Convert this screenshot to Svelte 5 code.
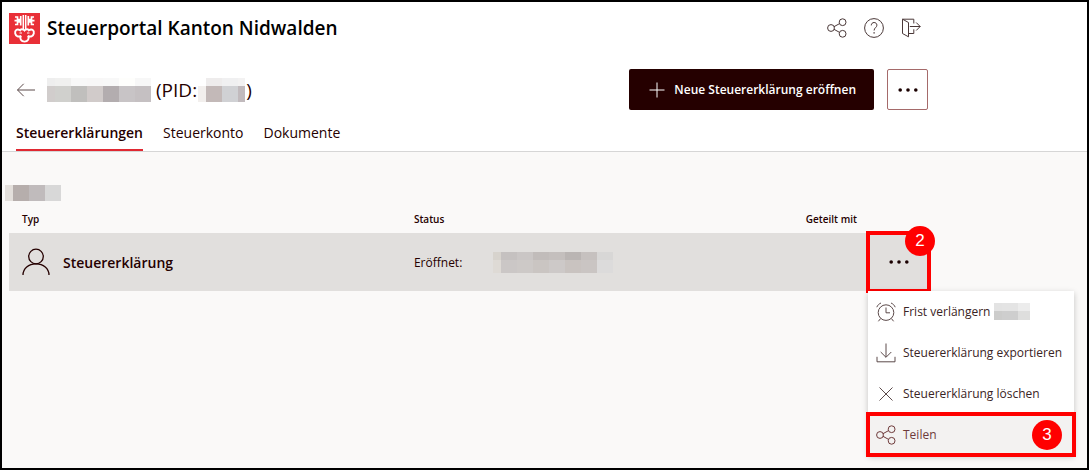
<script lang="ts">
  type Mosaic = { widths: number[]; rows: { height: number; colors: string[] }[] };

  const tabs = ['Steuererklärungen', 'Steuerkonto', 'Dokumente'];
  let activeTab = $state('Steuererklärungen');
  let menuOpen = $state(true);

  const menuItems = [
    { icon: 'clock', label: 'Frist verlängern' },
    { icon: 'download', label: 'Steuererklärung exportieren' },
    { icon: 'cross', label: 'Steuererklärung löschen' },
    { icon: 'share', label: 'Teilen' }
  ];

  const nameMosaic: Mosaic = {
    widths: [8, 16, 16, 16, 16, 16, 16],
    rows: [
      { height: 8, colors: ['#eeeeee', '#f0f0ef', '#f8f8f8', '#f8f7f7', '#f8f8f8', '#fefefc', '#f7f7f7'] },
      { height: 16, colors: ['#d1cdcc', '#d0d0cd', '#c0bfbd', '#d1cbca', '#b3adaf', '#c8c4c6', '#c5c0c2'] }
    ]
  };

  const pidMosaic: Mosaic = {
    widths: [8, 16, 16, 7],
    rows: [
      { height: 8, colors: ['#ffffff', '#eeecec', '#f0f0f1', '#f3f2f2'] },
      { height: 16, colors: ['#f2efed', '#c3b9b8', '#d0d1d4', '#c1babd'] }
    ]
  };

  const yearMosaic: Mosaic = {
    widths: [8, 16, 16, 16],
    rows: [{ height: 16, colors: ['#e3dfdb', '#b6aeac', '#c0bbbc', '#d8d8d8'] }]
  };

  const dateMosaic: Mosaic = {
    widths: [8, 16, 16, 16, 16, 16, 16, 16],
    rows: [
      { height: 8, colors: ['#d7d3cd', '#c5c1c0', '#cac6c5', '#c1bcba', '#c4bfbd', '#bab5b3', '#c6c1bf', '#d8d7d6'] },
      { height: 13, colors: ['#dedad5', '#cbc7c6', '#cdc9c7', '#cac5c2', '#cdc9c8', '#c9c3c0', '#cac5c3', '#dcdbdb'] }
    ]
  };

  const deadlineMosaic: Mosaic = {
    widths: [8, 16, 12],
    rows: [
      { height: 8, colors: ['#e3e3e3', '#e4e4e4', '#ececec'] },
      { height: 9, colors: ['#cccccb', '#cecece', '#dededd'] }
    ]
  };
</script>

{#snippet mosaic(m: Mosaic)}
  <span class="mosaic" aria-hidden="true">
    {#each m.rows as row}
      <span class="mosaic-row" style="height: {row.height}px">
        {#each row.colors as color, i}
          <span style="width: {m.widths[i]}px; background: {color}"></span>
        {/each}
      </span>
    {/each}
  </span>
{/snippet}

{#snippet icon(name: string)}
  <svg class="icon" viewBox="0 0 20 20" aria-hidden="true">
    {#if name === 'share'}
      <circle cx="4" cy="10" r="3.4" />
      <circle cx="15.6" cy="4.2" r="3.4" />
      <circle cx="15.6" cy="15.8" r="3.4" />
      <path d="M7 8.7 12.4 5.7M7 11.3l5.4 3" />
    {:else if name === 'help'}
      <circle cx="10" cy="10" r="9.4" />
      <path d="M7.3 7.4c0-1.8 1.2-2.9 2.8-2.9s2.8 1.1 2.8 2.7c0 2.4-2.8 2.5-2.8 5.3" />
      <path d="M10.1 14.2v1.4" stroke-width="1.4" />
    {:else if name === 'logout'}
      <path d="M1.5 1.2v14.3l6 3.3V4.5zM1.5 1.2h11.3v4.3M7.5 15.5h5.3v-4.2M8.8 8.5h10.4M15.2 4.5l4 4-4 4" />
    {:else if name === 'clock'}
      <circle cx="10" cy="10.6" r="7.8" />
      <path d="M10 5.5v5.3h4M.8 5.2C1.6 3.2 3 1.8 5 1M19.2 5.2C18.4 3.2 17 1.8 15 1M4.6 16.5l-2.2 2.8M15.4 16.5l2.2 2.8" />
    {:else if name === 'download'}
      <path d="M10 .5v13.7M4.7 9l5.3 5.3L15.3 9M1 13.8v5h18v-5" />
    {:else if name === 'cross'}
      <path d="m3.5 3.5 13 13M16.5 3.5l-13 13" />
    {:else if name === 'back'}
      <path d="M19 10H1.5M7.7 3.8 1.5 10l6.2 6.2" />
    {:else if name === 'plus'}
      <path d="M10 2.5v15M2.5 10h15" />
    {/if}
  </svg>
{/snippet}

{#snippet dots()}
  <svg class="dots" viewBox="0 0 20 4" aria-hidden="true">
    <circle cx="2.2" cy="2" r="1.8" />
    <circle cx="10" cy="2" r="1.8" />
    <circle cx="17.8" cy="2" r="1.8" />
  </svg>
{/snippet}

<div class="portal">
  <header class="head">
    <div class="brand-row">
      <svg class="logo" viewBox="0 0 31 31" aria-hidden="true">
        <rect width="31" height="31" fill="#e92f37" />
        <g fill="none" stroke="#fff">
          <path d="M14.3 2v15M16.7 2v15" stroke-width="1.5" />
          <path d="M6 4h2.500v2.500H12M6 11.500h2.500V9H12M5.500 7.700h6.500M11.700 3v9.500M25 4h-2.500v2.500H19M25 11.500h-2.500V9H19M25.500 7.700H19M19.300 3v9.500" stroke-width="1.700" />
          <path d="M15.500 17.500C14 15.600 11.500 16 11 17.300C8 15.500 5.600 17.500 6.200 20.500C6.800 23.400 9.700 24.300 12 22.800C10.300 25.800 12.200 28.600 15.500 28.600C18.800 28.600 20.700 25.800 19 22.800C21.300 24.300 24.200 23.400 24.800 20.500C25.400 17.500 23 15.500 20 17.300C19.500 16 17 15.600 15.500 17.500Z" stroke-width="1.900" />
          <path d="M10.500 20h2.500M18 20h2.500" stroke-width="1.200" />
        </g>
      </svg>
      <span class="brand">Steuerportal Kanton Nidwalden</span>
      <div class="tools">
        <button type="button" aria-label="Teilen">{@render icon('share')}</button>
        <button type="button" aria-label="Hilfe">{@render icon('help')}</button>
        <button type="button" aria-label="Abmelden">{@render icon('logout')}</button>
      </div>
    </div>

    <div class="title-row">
      <button class="back" type="button" aria-label="Zurück">{@render icon('back')}</button>
      <h1>
        {@render mosaic(nameMosaic)}
        <span class="pid">(PID:</span>
        {@render mosaic(pidMosaic)}
        <span class="paren">)</span>
      </h1>
      <div class="actions">
        <button class="primary" type="button">{@render icon('plus')}Neue Steuererklärung eröffnen</button>
        <button class="more" type="button" aria-label="Weitere Aktionen">{@render dots()}</button>
      </div>
    </div>

    <nav class="tabs">
      {#each tabs as tab}
        <button type="button" class:active={tab === activeTab} onclick={() => (activeTab = tab)}>{tab}</button>
      {/each}
    </nav>
  </header>

  <main>
    <div class="year">{@render mosaic(yearMosaic)}</div>
    <table>
      <thead>
        <tr>
          <th class="col-wide">Typ</th>
          <th class="col-wide">Status</th>
          <th>Geteilt mit</th>
          <th class="col-more"></th>
        </tr>
      </thead>
      <tbody>
        <tr>
          <td>
            <div class="type">
              <svg class="person" viewBox="0 0 28 28" aria-hidden="true">
                <circle cx="14" cy="8.500" r="7.300" />
                <path d="M1 27c0-6.500 5.600-11.200 13-11.200S27 20.500 27 27" />
              </svg>
              Steuererklärung
            </div>
          </td>
          <td>
            <div class="status">
              <span class="status-label">Eröffnet:</span>
              {@render mosaic(dateMosaic)}
            </div>
          </td>
          <td></td>
          <td class="cell-more">
            <button
              class="row-more"
              type="button"
              aria-label="Aktionen"
              aria-expanded={menuOpen}
              onclick={() => (menuOpen = !menuOpen)}
            >
              {@render dots()}
            </button>
            <span class="mark"></span>
            <span class="step step-corner">2</span>

            {#if menuOpen}
              <div class="menu" role="menu">
                {#each menuItems as item (item.label)}
                  <button type="button" role="menuitem" class:current={item.icon === 'share'}>
                    {@render icon(item.icon)}
                    <span>{item.label}</span>
                    {#if item.icon === 'clock'}
                      {@render mosaic(deadlineMosaic)}
                    {/if}
                    {#if item.icon === 'share'}
                      <span class="step step-end">3</span>
                      <span class="mark"></span>
                    {/if}
                  </button>
                {/each}
              </div>
            {/if}
          </td>
        </tr>
      </tbody>
    </table>
  </main>
</div>

<style>
  :global(body) {
    margin: 0;
  }

  .portal {
    box-sizing: border-box;
    min-height: 100vh;
    border: 2px solid #000;
    background: #faf9f8;
    color: #250000;
    font-family: 'Open Sans', 'Noto Sans', sans-serif;
    font-size: 12px;
  }

  button {
    border: none;
    padding: 0;
    background: transparent;
    color: inherit;
    font: inherit;
    cursor: pointer;
  }

  .icon {
    display: block;
    flex: none;
    width: 20px;
    height: 20px;
    fill: none;
    stroke: currentColor;
    stroke-width: 1;
  }

  .dots {
    display: block;
    width: 20px;
    height: 4px;
    fill: #1a0000;
  }

  .mosaic {
    display: inline-flex;
    flex: none;
    flex-direction: column;
  }

  .mosaic-row {
    display: flex;
  }

  .head {
    background: #fff;
    border-bottom: 1px solid #d6d6d6;
  }

  .brand-row {
    display: flex;
    align-items: center;
    height: 52px;
    padding: 0 166px 0 7px;
  }

  .logo {
    flex: none;
    width: 31px;
    height: 31px;
  }

  .brand {
    margin-left: 7px;
    color: #000;
    font-size: 19px;
    font-weight: 600;
    white-space: nowrap;
  }

  .tools {
    display: flex;
    gap: 17px;
    margin-left: auto;
    color: #4a3838;
  }

  .title-row {
    display: flex;
    align-items: center;
    height: 71px;
    padding: 0 159px 0 14px;
  }

  .back {
    color: #5c4a4a;
  }

  h1 {
    display: flex;
    align-items: center;
    margin: 0 0 0 11px;
    font-size: 19px;
    font-weight: 400;
    white-space: nowrap;
  }

  .pid {
    margin: 0 1px 0 5px;
  }

  .paren {
    margin-left: 1px;
  }

  .actions {
    display: flex;
    gap: 13px;
    margin-left: auto;
  }

  .primary {
    display: flex;
    align-items: center;
    gap: 7px;
    height: 41px;
    padding: 0 18px;
    border-radius: 2px;
    background: #250000;
    color: #fff;
    font-weight: 600;
    white-space: nowrap;
  }

  .more {
    display: grid;
    place-items: center;
    box-sizing: border-box;
    width: 41px;
    height: 41px;
    border: 1px solid #a56a6a;
    border-radius: 2px;
    background: #fff;
  }

  .tabs {
    display: flex;
    gap: 20px;
    padding-left: 14px;
    font-size: 14px;
  }

  .tabs button {
    padding-bottom: 8px;
    border-bottom: 2px solid transparent;
    line-height: 16px;
  }

  .tabs .active {
    border-color: #e02832;
    font-weight: 600;
  }

  main {
    padding: 33px 158px 0 7px;
  }

  .year {
    display: flex;
    margin-left: -4px;
  }

  table {
    width: 100%;
    border-collapse: collapse;
    table-layout: fixed;
  }

  th {
    height: 32px;
    padding: 4px 0 0 13px;
    box-sizing: border-box;
    font-size: 10px;
    font-weight: 600;
    text-align: left;
  }

  .col-wide {
    width: 42.6%;
  }

  .col-more {
    width: 61px;
  }

  td {
    height: 58px;
    padding: 0 0 0 13px;
    background: #e1dfdd;
  }

  .type {
    display: flex;
    align-items: center;
    gap: 13px;
    font-size: 14px;
    font-weight: 600;
  }

  .person {
    width: 28px;
    height: 28px;
    fill: none;
    stroke: #250000;
    stroke-width: 1.3;
  }

  .status {
    display: flex;
    align-items: center;
  }

  .status-label {
    width: 79px;
  }

  .cell-more {
    position: relative;
    padding: 0;
  }

  .row-more {
    display: grid;
    place-items: center;
    width: 100%;
    height: 58px;
  }

  .mark {
    position: absolute;
    inset: -2px;
    border: 4px solid #f00;
    pointer-events: none;
  }

  .step {
    display: grid;
    place-items: center;
    width: 30px;
    height: 30px;
    border-radius: 50%;
    background: #f00;
    color: #fff;
    font-family: 'Liberation Sans', Arial, sans-serif;
    font-size: 17px;
    line-height: 30px;
  }

  .step-corner {
    position: absolute;
    top: -7px;
    right: -6px;
  }

  .step-end {
    margin-left: auto;
  }

  .menu {
    position: absolute;
    top: 100%;
    left: 0;
    width: 206px;
    background: #fff;
    box-shadow: 0 2px 6px rgba(0, 0, 0, 0.22);
  }

  .menu button {
    position: relative;
    display: flex;
    align-items: center;
    gap: 7px;
    width: 100%;
    height: 41px;
    padding: 0 12px 0 8px;
    color: #3a2424;
    white-space: nowrap;
  }

  .menu .mosaic {
    margin-left: -3px;
  }

  .menu .icon {
    color: #5c4a4a;
  }

  .menu .current,
  .menu .current .icon {
    color: #6e3a3a;
  }

  .menu .current {
    background: #f3f2f1;
  }
</style>
